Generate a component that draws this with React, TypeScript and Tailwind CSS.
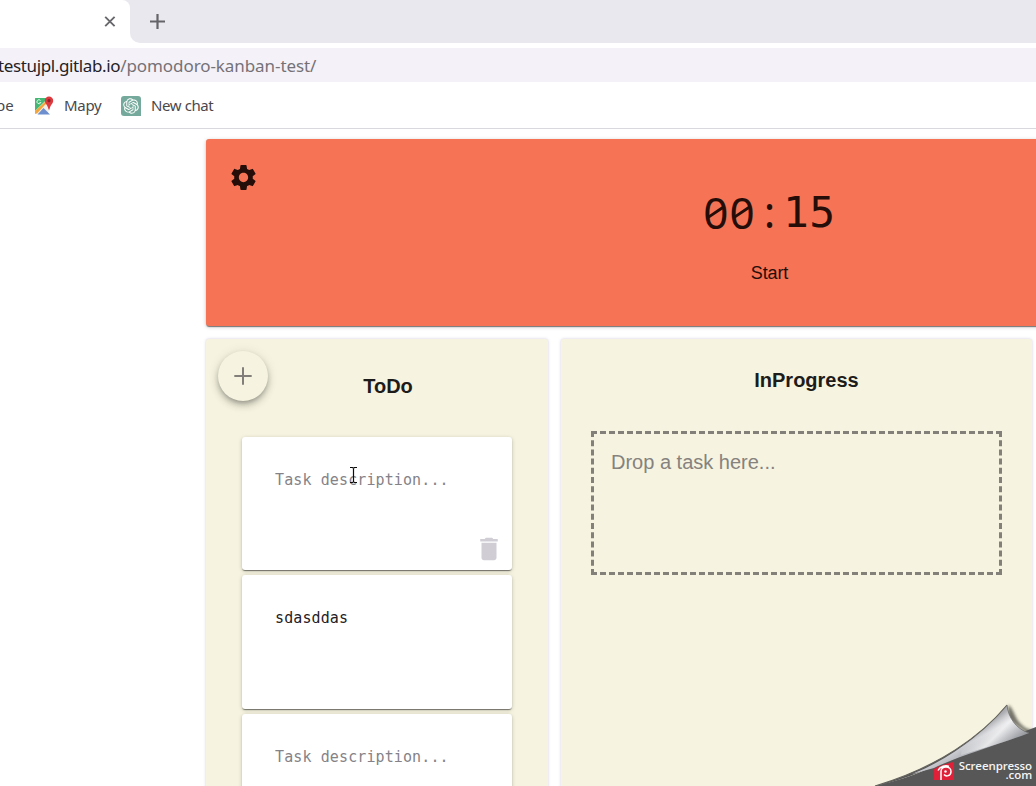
import React from "react";

const cardShadow =
  "shadow-[0_2px_1px_-1px_rgba(0,0,0,0.3),0_1px_1px_0_rgba(0,0,0,0.24),0_1px_4px_0_rgba(0,0,0,0.2)]";

function MapsIcon() {
  return (
    <svg width="20" height="20" viewBox="0 0 20 20" className="shrink-0">
      <path d="M2 2h12v16H2a1 1 0 0 1-1-1V3a1 1 0 0 1 1-1z" fill="#43b874" />
      <path d="M1 15 12 4l4 3v7l-4 4H2l-1-1z" fill="#f3efe8" />
      <path d="M1 15 12 5l1.200 1.500L3 17.500H1z" fill="#f2a63c" />
      <path d="M3.500 18.500l6-6.500 6.500 6.500z" fill="#6d8fd0" />
      <path d="M1 3a1 1 0 0 1 1-1h10v2L1 14z" fill="#43b874" />
      <path d="M6.500 4.500a2 2 0 1 0 .3 2H5.500" fill="none" stroke="#e6f6ec" strokeWidth="1" />
      <path d="M15 .5a4.200 4.200 0 0 1 4.200 4.200c0 3-3.200 4.300-3.700 8.800h-1c-.5-4.500-3.700-5.800-3.700-8.800A4.200 4.200 0 0 1 15 .5z" fill="#dc3a3e" />
      <circle cx="15" cy="4.700" r="1.600" fill="#8d1f27" />
    </svg>
  );
}

function ChatIcon() {
  return (
    <svg width="20" height="20" viewBox="0 0 20 20" className="shrink-0">
      <path d="M3 0h14a3 3 0 0 1 3 3v17H3a3 3 0 0 1-3-3V3a3 3 0 0 1 3-3z" fill="#75a99b" />
      <g transform="translate(2.200 2.200) scale(0.650)">
        <path
          fill="#fff"
          d="M22.282 9.821a5.985 5.985 0 0 0-.516-4.910 6.046 6.046 0 0 0-6.510-2.900A6.065 6.065 0 0 0 4.981 4.182a5.985 5.985 0 0 0-3.998 2.900 6.046 6.046 0 0 0 .743 7.097 5.980 5.980 0 0 0 .511 4.911 6.051 6.051 0 0 0 6.515 2.900A5.985 5.985 0 0 0 13.260 24a6.056 6.056 0 0 0 5.772-4.206 5.990 5.990 0 0 0 3.998-2.900 6.056 6.056 0 0 0-.748-7.073zM13.260 22.430a4.476 4.476 0 0 1-2.876-1.041l.141-.080 4.779-2.758a.795.795 0 0 0 .393-.681v-6.737l2.020 1.169a.071.071 0 0 1 .038.052v5.583a4.504 4.504 0 0 1-4.495 4.493zM3.600 18.304a4.471 4.471 0 0 1-.535-3.014l.142.085 4.783 2.758a.771.771 0 0 0 .780 0l5.843-3.368v2.332a.080.080 0 0 1-.033.062L9.740 19.950a4.499 4.499 0 0 1-6.140-1.646zM2.341 7.896a4.485 4.485 0 0 1 2.365-1.973V11.600a.766.766 0 0 0 .388.677l5.815 3.354-2.020 1.169a.076.076 0 0 1-.071 0l-4.830-2.787A4.504 4.504 0 0 1 2.341 7.896zm16.596 3.856-5.833-3.388 2.015-1.163a.076.076 0 0 1 .071 0l4.830 2.791a4.494 4.494 0 0 1-.677 8.105v-5.678a.790.790 0 0 0-.406-.667zm2.011-3.024-.142-.085-4.774-2.782a.776.776 0 0 0-.785 0L9.409 9.230V6.897a.066.066 0 0 1 .028-.061l4.830-2.787a4.499 4.499 0 0 1 6.681 4.660zM8.307 12.863l-2.020-1.164a.080.080 0 0 1-.038-.057V6.074a4.499 4.499 0 0 1 7.376-3.453l-.142.080-4.778 2.758a.795.795 0 0 0-.393.681zm1.097-2.366 2.602-1.500 2.607 1.500v3l-2.597 1.500-2.607-1.500z"
        />
      </g>
    </svg>
  );
}

function Browser() {
  return (
    <header className="shrink-0 font-['Noto_Sans','Open_Sans',sans-serif]">
      <div className="flex h-[43px] bg-white">
        <div className="flex w-[130px] shrink-0 items-center justify-end bg-white pr-[15px]">
          <svg width="11" height="11" viewBox="0 0 11 11" className="overflow-visible">
            <path d="M1.200.8l9.400 9.400M10.600.8 1.200 10.200" stroke="#68676b" strokeWidth="1.900" />
          </svg>
        </div>
        <div className="-ml-2 flex-1 bg-[#e9e8ee]">
          <div className="flex h-full">
            <div className="h-full w-2 rounded-tr-[8px] bg-white" />
            <div className="flex flex-1 items-center bg-white">
              <div className="flex h-full flex-1 items-center rounded-bl-[10px] bg-[#e9e8ee] pl-[19px]">
                <svg width="16" height="16" viewBox="0 0 16 16">
                  <path d="M8.500 0v15M1 7.500h15" stroke="#656468" strokeWidth="2.200" />
                </svg>
              </div>
            </div>
          </div>
        </div>
      </div>
      <div className="bg-white pt-[5px]">
        <div className="flex h-[34px] items-center bg-[#f4f1f8]">
          <p className="-ml-[2px] pt-px text-[17px] leading-[34px] tracking-[-0.210px] whitespace-nowrap text-[#747277]">
            <span className="tracking-[-0.370px] text-[#242226]">testujpl.gitlab.io</span>
            <span className="tracking-[-0.080px]">/pomodoro-kanban-test/</span>
          </p>
        </div>
      </div>
      <nav className="flex h-[47px] items-center border-b border-[#d9d8de] bg-white pt-px text-[15px] text-[#4a484d]">
        <span className="-ml-[4px] w-[38px]">be</span>
        <MapsIcon />
        <span className="ml-[10px] w-[57px] tracking-[-0.3px]">Mapy</span>
        <ChatIcon />
        <span className="ml-[10px] tracking-[-0.4px] whitespace-nowrap">New chat</span>
      </nav>
    </header>
  );
}

function ZeroDigit() {
  return (
    <span className="relative -left-px w-[26.400px] text-center font-['Noto_Sans',sans-serif] text-[44px]">
      0
      <svg width="18" height="14" viewBox="0 0 18 14" className="absolute top-[21px] left-[4px]">
        <path d="M1.500 12.200 16.500 2" stroke="#250d09" strokeWidth="2.800" />
      </svg>
    </span>
  );
}

function Timer() {
  return (
    <section className={`relative h-[187px] w-[1127px] shrink-0 rounded-[3px] bg-[#f67455] ${cardShadow}`}>
      <svg width="31" height="31" viewBox="0 0 24 24" className="absolute top-[23px] left-[22px]">
        <path
          fill="#250d09"
          d="M19.140 12.940c.040-.3.060-.610.060-.940 0-.320-.020-.640-.070-.940l2.030-1.580a.490.490 0 0 0 .120-.610l-1.920-3.320a.488.488 0 0 0-.590-.220l-2.390.960c-.5-.380-1.030-.7-1.620-.940l-.360-2.540a.484.484 0 0 0-.480-.410h-3.840c-.240 0-.430.170-.470.410l-.360 2.540c-.590.240-1.130.570-1.620.940l-2.390-.960c-.220-.080-.470 0-.590.220L2.740 8.870c-.120.210-.080.470.120.610l2.030 1.580c-.050.3-.090.630-.090.940s.020.640.070.940l-2.030 1.580a.490.490 0 0 0-.120.610l1.920 3.320c.120.220.370.290.590.220l2.390-.960c.5.380 1.030.7 1.620.940l.360 2.540c.050.240.240.410.480.410h3.840c.240 0 .440-.170.470-.410l.360-2.540c.590-.240 1.130-.560 1.620-.940l2.390.960c.220.080.470 0 .590-.220l1.920-3.320c.120-.220.070-.470-.120-.610l-2.010-1.580zM12 15.600c-1.980 0-3.600-1.620-3.600-3.600s1.620-3.600 3.600-3.600 3.600 1.620 3.600 3.600-1.620 3.600-3.600 3.600z"
        />
      </svg>
      <div className="flex flex-col items-center pt-[45px] text-[#250d09]">
        <div className="flex h-14 items-center font-['DejaVu_Sans_Mono',monospace] text-[43px] leading-[56px]">
          <ZeroDigit />
          <ZeroDigit />
          <span className="w-[26.400px] text-center font-['Noto_Sans',sans-serif]">:</span>
          <span className="w-[26.400px] text-center">1</span>
          <span className="w-[26.400px] text-center">5</span>
        </div>
        <button className="mt-[22px] font-['Liberation_Sans',Arial,sans-serif] text-[18px] leading-[22px] tracking-[-0.1px]">
          Start
        </button>
      </div>
    </section>
  );
}

function TaskCard({ text, trash = false }: { text?: string; trash?: boolean }) {
  return (
    <article className={`relative h-[133.600px] shrink-0 rounded-[3px] bg-white px-[33px] pt-[33px] ${cardShadow}`}>
      <p
        className={`font-['DejaVu_Sans_Mono',monospace] text-[15px] leading-5 tracking-[0.110px] whitespace-nowrap ${text ? "text-[#242126]" : "text-[#858287]"}`}
      >
        {text ?? "Task description..."}
      </p>
      {trash && (
        <>
          <svg width="30" height="30" viewBox="0 0 24 24" className="absolute top-[97px] right-2" fill="#d0cdd5">
            <path d="M6 19c0 1.100.9 2 2 2h8c1.100 0 2-.9 2-2V7H6zM19 4h-3.500l-1-1h-5l-1 1H5v2h14z" />
          </svg>
          <svg width="9" height="18" viewBox="0 0 9 18" className="absolute top-[29px] left-[107px]">
            <path
              d="M1 1.500h2.500l1 .7 1-.7H8M4.500 2v14M1 16.500h2.500l1-.7 1 .7H8"
              fill="none"
              stroke="#0c0b0d"
              strokeWidth="1.200"
            />
          </svg>
        </>
      )}
    </article>
  );
}

function PageCurl() {
  return (
    <div className="absolute right-0 bottom-0 h-[84px] w-[164px]">
      <svg width="164" height="84" viewBox="0 0 164 84" className="block">
        <defs>
          <linearGradient id="fold" x1="100" y1="28" x2="114" y2="54" gradientUnits="userSpaceOnUse">
            <stop offset="0" stopColor="#9b9ca0" />
            <stop offset="0.350" stopColor="#cdced3" />
            <stop offset="0.650" stopColor="#b3b5ba" />
            <stop offset="1" stopColor="#919499" />
          </linearGradient>
          <linearGradient id="tip" x1="118" y1="18" x2="142" y2="42" gradientUnits="userSpaceOnUse">
            <stop offset="0" stopColor="#fff" stopOpacity="0" />
            <stop offset="0.450" stopColor="#fff" stopOpacity="0.700" />
            <stop offset="1" stopColor="#c9c9ce" stopOpacity="0.100" />
          </linearGradient>
          <filter id="soft" x="-20%" y="-20%" width="140%" height="140%">
            <feGaussianBlur stdDeviation="1.500" />
          </filter>
        </defs>
        <path d="M136 3c5 2 6 11 11 17 4 5 9 8 15 8l-6 4-20-15z" fill="#55534c" opacity="0.800" filter="url(#soft)" />
        <path d="M3 84C24 79 40 74 58 66L164 25V84z" fill="#575757" />
        <path d="M3 84C67 65 110 33 135 3c1 12 9 24 22 28C126 43 84 55 50 69 34 76 18 81 3 84z" fill="#575757" />
        <path d="M40 72C78 57 112 31 135 3c1 12 9 24 22 28C126 43 84 55 62 66z" fill="url(#fold)" />
        <path d="M90 43C111 29 125 15 135 3c1 12 9 24 22 28-24 9-46 15-68 22z" fill="url(#tip)" />
        <path d="M3 84C67 65 110 33 135 3" fill="none" stroke="#62615c" strokeWidth="1.100" />
        <path d="M135 3c1 12 9 24 22 28" fill="none" stroke="#74736f" strokeWidth="0.800" />
        <path d="M62 67C69 63 76 61 82 60v18H62z" fill="#df2038" />
        <path
          d="M69 78V69.500c0-6 10-6 10 0 0 4.500-5 5.500-7 3M66 68.500c2-4.500 8-5.500 11-4"
          fill="none"
          stroke="#fff"
          strokeWidth="1.500"
        />
        <circle cx="73.500" cy="69.500" r="1.200" fill="#fff" />
      </svg>
      <div className="absolute right-1 bottom-[7px] text-right font-['Open_Sans',sans-serif] text-[11.500px] leading-[9px] font-semibold tracking-[-0.1px] text-[#f4f4f4]">
        <div>Screenpresso</div>
        <div>.com</div>
      </div>
    </div>
  );
}

export default function App() {
  return (
    <div className="relative flex h-[786px] w-[1036px] flex-col overflow-hidden bg-white">
      <Browser />
      <main className="flex min-h-0 flex-1 flex-col gap-[13px] overflow-hidden pt-[10px] pl-[206px] font-['Liberation_Sans',Arial,sans-serif]">
        <Timer />
        <div className="flex shrink-0 gap-[13px]">
          <section className="relative h-[500px] w-[342px] shrink-0 rounded-[3px] bg-[#f6f4e0] px-9 pt-[34px] shadow-[0_0_3px_rgba(70,50,120,0.250)]">
            <button className="absolute top-3 left-3 flex size-[50px] items-center justify-center rounded-full bg-[#f6f4e0] shadow-[0_3px_5px_-1px_rgba(0,0,0,0.250),0_5px_8px_0_rgba(0,0,0,0.140),0_1px_12px_0_rgba(0,0,0,0.100)]">
              <svg width="18" height="18" viewBox="0 0 18 18">
                <path d="M9 .3v17.400M.3 9h17.400" stroke="#827f7b" strokeWidth="2" />
              </svg>
            </button>
            <h2 className="pl-[22px] text-center text-[20px] leading-[26px] font-bold text-[#1e1c1b]">ToDo</h2>
            <div className="mt-[37.800px] flex flex-col gap-[5px]">
              <TaskCard trash />
              <TaskCard text="sdasddas" />
              <TaskCard />
            </div>
          </section>
          <section className="h-[500px] w-[471px] shrink-0 rounded-[3px] bg-[#f6f4e0] px-[30px] pt-[28px] shadow-[0_0_3px_rgba(70,50,120,0.250)]">
            <h2 className="pl-5 text-center text-[20px] leading-[26px] font-bold text-[#1e1c1b]">InProgress</h2>
            <div className="mt-[38px] h-[144px] border-3 border-dashed border-[#837f79] px-[17px] pt-[15px] text-[20px] leading-[26px] text-[#85827f]">
              Drop a task here...
            </div>
          </section>
        </div>
      </main>
      <PageCurl />
    </div>
  );
}
